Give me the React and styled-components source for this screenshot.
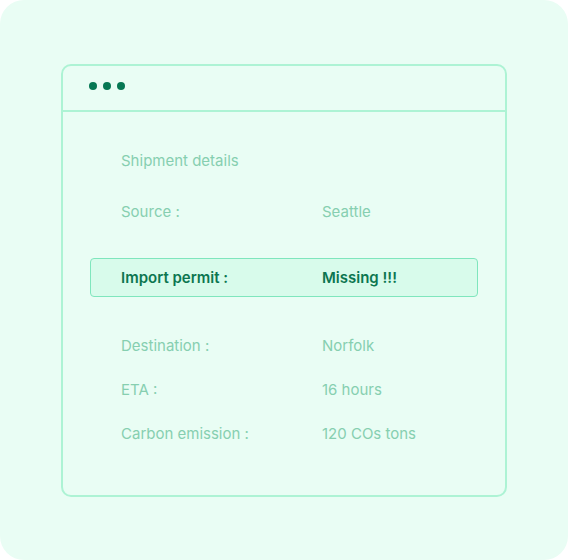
import React from 'react'
import styled, { createGlobalStyle } from 'styled-components'

const GlobalStyle = createGlobalStyle`
  html, body {
    margin: 0;
    padding: 0;
    background: #ffffff;
  }
  body {
    font-family: Inter, "Noto Sans", sans-serif;
  }
`

// #region Styles
const Stage = styled.div`
  width: 568px;
  height: 560px;
  box-sizing: border-box;
  padding: 64px 61px 63px;
  background: #e9fdf4;
  border-radius: 24px;
`
const Window = styled.div`
  display: flex;
  flex-direction: column;
  height: 100%;
  box-sizing: border-box;
  border: 2px solid #adf3d4;
  border-radius: 10px;
`
const TitleBar = styled.div`
  display: flex;
  align-items: center;
  gap: 6px;
  height: 40px;
  padding: 0 0 4px 26px;
  border-bottom: 2px solid #adf3d4;
  box-sizing: content-box;
`
const Dot = styled.span`
  width: 8px;
  height: 8px;
  border-radius: 50%;
  background: #067853;
`
const Body = styled.div`
  display: flex;
  flex-direction: column;
  padding: 39px 27px 0;
`
const Heading = styled.div`
  padding-left: 31px;
  font-size: 15px;
  line-height: 20px;
  color: #86cfb0;
`
const Row = styled.div`
  display: grid;
  grid-template-columns: 201px 1fr;
  align-items: center;
  box-sizing: border-box;
  padding-left: 31px;
  margin-top: ${p => p.$gap}px;
  height: ${p => (p.$alert ? 39 : 20)}px;
  font-size: 15px;
  line-height: 20px;
  font-weight: ${p => (p.$alert ? 600 : 400)};
  color: ${p => (p.$alert ? '#0c7650' : '#86cfb0')};
  background: ${p => (p.$alert ? '#d8fbeb' : 'transparent')};
  border: ${p => (p.$alert ? '1px solid #7fe6bd' : 'none')};
  border-radius: 4px;
  ${p => p.$alert && 'padding-left: 30px;'}
`
// #endregion

const rows = [
  { label: 'Source :', value: 'Seattle', gap: 31 },
  { label: 'Import permit :', value: 'Missing !!!', gap: 36, alert: true },
  { label: 'Destination :', value: 'Norfolk', gap: 39 },
  { label: 'ETA :', value: '16 hours', gap: 24 },
  { label: 'Carbon emission :', value: '120 COs tons', gap: 24 },
]

const App = () => (
  <>
    <GlobalStyle />
    <Stage>
      <Window>
        <TitleBar>
          <Dot />
          <Dot />
          <Dot />
        </TitleBar>
        <Body>
          <Heading>Shipment details</Heading>
          {rows.map(r => (
            <Row key={r.label} $gap={r.gap} $alert={r.alert}>
              <span>{r.label}</span>
              <span>{r.value}</span>
            </Row>
          ))}
        </Body>
      </Window>
    </Stage>
  </>
)

export default App
